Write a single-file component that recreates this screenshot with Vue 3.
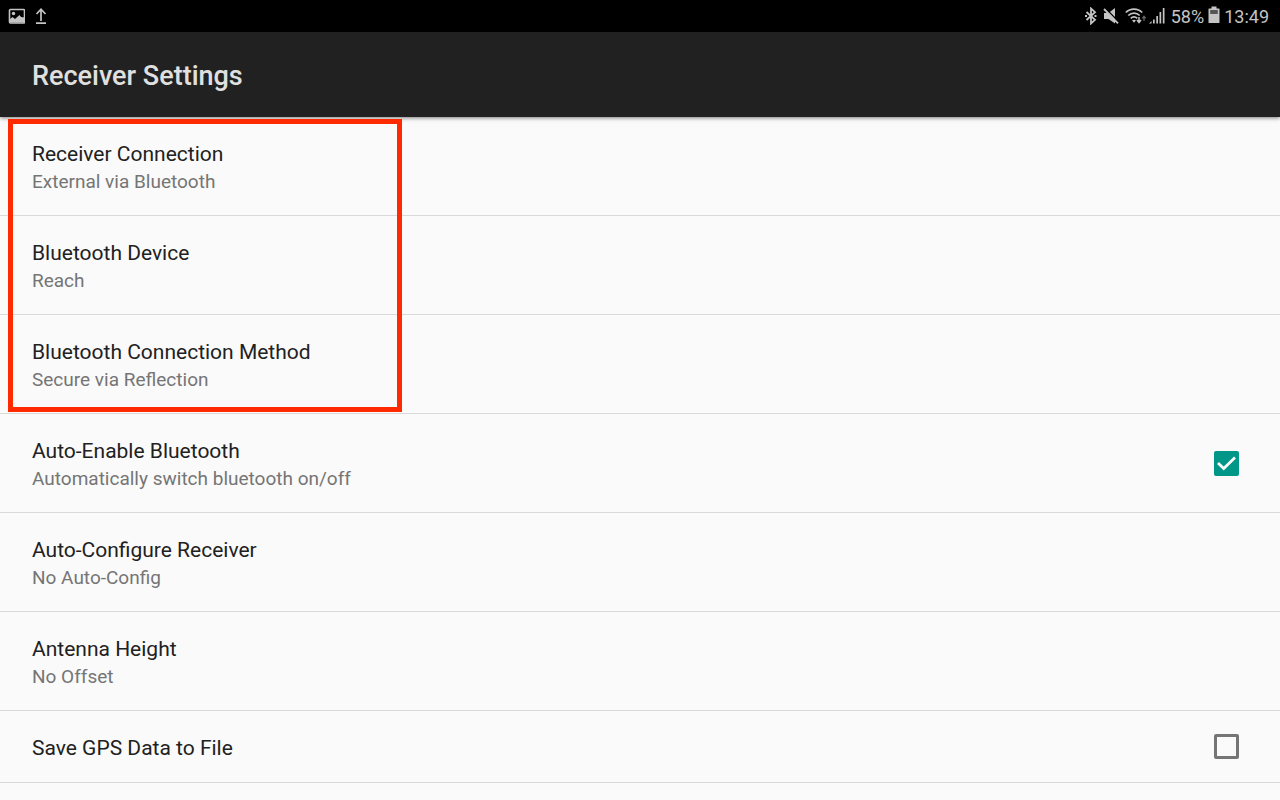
<template>
  <div class="screen">
    <!-- Status bar -->
    <div class="status-bar">
      <div class="status-left">
        <svg width="17" height="16" viewBox="0 0 17 16">
          <rect x="1.500" y="1.500" width="15" height="13.500" rx="1" fill="none" stroke="#c4c4c4" stroke-width="1.600" />
          <circle cx="5.500" cy="5.500" r="1.700" fill="#c4c4c4" />
          <path d="M1.500 14.500V11.500L4.500 9L7 11L11.500 7L13 9L16.500 9.500V14.500Z" fill="#c4c4c4" />
        </svg>
        <svg width="12" height="18" viewBox="0 0 12 18">
          <path d="M6 14V2.500M1.500 7L6 2.200L10.500 7M1 16.200H11" fill="none" stroke="#c4c4c4" stroke-width="1.700" />
        </svg>
      </div>
      <div class="status-right">
        <svg width="12" height="18" viewBox="0 0 12 18">
          <path d="M1.500 5L10 12.800L6 16.500V1.500L10 5.200L1.500 13" fill="none" stroke="#c4c4c4" stroke-width="1.800" />
          <path d="M0 9h2M9.500 9h2" stroke="#c4c4c4" stroke-width="1.800" />
        </svg>
        <svg class="mute" width="16" height="18" viewBox="0 0 16 18">
          <path d="M1 6H5.500L12 1V16.500L5.500 12H1Z" fill="#c4c4c4" />
          <path d="M2 1L16 15" stroke="#000" stroke-width="1.500" />
          <path d="M1 2L15 16.300" stroke="#c4c4c4" stroke-width="1.800" />
        </svg>
        <svg class="wifi" width="22" height="18" viewBox="0 0 22 18">
          <g fill="none" stroke="#c4c4c4" stroke-width="1.700">
            <path d="M0.800 5.500A11.500 11.500 0 0 1 17.200 5.500" />
            <path d="M3.300 8.500A8 8 0 0 1 14.700 8.500" />
            <path d="M5.800 11.300A4.500 4.500 0 0 1 12.200 11.300" />
          </g>
          <path d="M7 13.300Q9 12 11 13.300L9 15.700Z" fill="#c4c4c4" />
          <path d="M14 10V15M12 13L14 15.500L16 13" fill="none" stroke="#c4c4c4" stroke-width="1.500" />
          <path d="M19 14V9.500M17.300 11.300L19 9.300L20.700 11.300" fill="none" stroke="#666" stroke-width="1.300" />
        </svg>
        <svg width="16" height="18" viewBox="0 0 16 18">
          <path d="M0 16.500L2.500 14V16.500ZM4 12.500H5.700V16.500H4ZM7.300 9H9V16.500H7.300ZM10.500 5H12.200V16.500H10.500ZM13.800 1H15.500V16.500H13.800Z" fill="#c4c4c4" />
        </svg>
        <span class="battery-level">58%</span>
        <svg width="12" height="20" viewBox="0 0 12 20">
          <path d="M3.500 0.500H8.500V2.500H11Q11.500 2.500 11.500 3V16.500Q11.500 17 11 17H1Q0.500 17 0.500 16.500V3Q0.500 2.500 1 2.500H3.500Z" fill="#c4c4c4" />
          <rect x="2.200" y="4" width="7.600" height="4" fill="#555" />
        </svg>
        <span class="clock">13:49</span>
      </div>
    </div>

    <header class="app-bar">
      <h1>Receiver Settings</h1>
    </header>

    <main class="settings">
      <!-- Connection settings -->
      <section class="connection">
        <button v-for="item in connection" :key="item.title" type="button" class="row">
          <span class="text">
            <span class="title">{{ item.title }}</span>
            <span class="summary">{{ item.summary }}</span>
          </span>
        </button>
        <div class="highlight"></div>
      </section>

      <!-- Other settings -->
      <template v-for="item in settings" :key="item.title">
        <label v-if="item.toggle" class="row">
          <span class="text">
            <span class="title">{{ item.title }}</span>
            <span v-if="item.summary" class="summary">{{ item.summary }}</span>
          </span>
          <span class="check">
            <input v-model="item.enabled" type="checkbox" />
            <svg v-if="item.enabled" width="25" height="25" viewBox="0 0 25 25">
              <path d="M4 12L9.700 17.500L21 6.500" fill="none" stroke="#fafafa" stroke-width="2.700" />
            </svg>
          </span>
        </label>
        <button v-else type="button" class="row">
          <span class="text">
            <span class="title">{{ item.title }}</span>
            <span class="summary">{{ item.summary }}</span>
          </span>
        </button>
      </template>
    </main>
  </div>
</template>

<script setup>
import { ref } from 'vue'

const connection = [
  { title: 'Receiver Connection', summary: 'External via Bluetooth' },
  { title: 'Bluetooth Device', summary: 'Reach' },
  { title: 'Bluetooth Connection Method', summary: 'Secure via Reflection' }
]

const settings = ref([
  { title: 'Auto-Enable Bluetooth', summary: 'Automatically switch bluetooth on/off', toggle: true, enabled: true },
  { title: 'Auto-Configure Receiver', summary: 'No Auto-Config' },
  { title: 'Antenna Height', summary: 'No Offset' },
  { title: 'Save GPS Data to File', toggle: true, enabled: false }
])
</script>

<style>
body {
  margin: 0;
  background: #fafafa;
}
</style>

<style scoped>
.screen {
  min-height: 100vh;
  background: #fafafa;
  font-family: Roboto, sans-serif;
}

.status-bar {
  display: flex;
  justify-content: space-between;
  align-items: center;
  height: 32px;
  padding: 0 11px 0 8px;
  background: #000;
  color: #c4c4c4;
  font-size: 18px;
}

.status-left,
.status-right {
  display: flex;
  align-items: center;
}

.status-left {
  gap: 10px;
}

.mute {
  margin-left: 6px;
}

.wifi {
  margin: 0 2px 0 6px;
}

.battery-level {
  margin: 0 4px 0 6px;
}

.clock {
  margin-left: 4px;
}

.app-bar {
  position: relative;
  display: flex;
  align-items: center;
  box-sizing: border-box;
  height: 85px;
  padding: 2px 32px 0;
  background: #212121;
  box-shadow: 0 1px 4px rgba(0, 0, 0, 0.5);
}

.app-bar h1 {
  margin: 0;
  color: #e0e0e0;
  font-size: 27px;
  font-weight: 500;
}

.connection {
  position: relative;
}

.row {
  display: flex;
  align-items: center;
  justify-content: space-between;
  box-sizing: border-box;
  width: 100%;
  padding: 0 41px 0 32px;
  border: 0;
  border-bottom: 1px solid #d9d9d9;
  background: none;
  font-family: inherit;
  text-align: left;
  cursor: pointer;
}

.text {
  display: flex;
  flex-direction: column;
  padding: 23px 0 20px;
}

.title {
  color: #212121;
  font-size: 21px;
  line-height: 28px;
}

.summary {
  color: #757575;
  font-size: 19px;
  line-height: 27px;
}

.check {
  display: grid;
}

.check input,
.check svg {
  grid-area: 1 / 1;
}

.check input {
  appearance: none;
  box-sizing: border-box;
  width: 25px;
  height: 25px;
  margin: 0;
  border: 3px solid #757575;
  border-radius: 2px;
}

.check input:checked {
  border-color: #009688;
  background: #009688;
}

.check svg {
  pointer-events: none;
}

.highlight {
  position: absolute;
  top: 2px;
  bottom: 2px;
  left: 8px;
  box-sizing: border-box;
  width: 394px;
  border: 5px solid #ff2a00;
  pointer-events: none;
  z-index: 1;
}
</style>
